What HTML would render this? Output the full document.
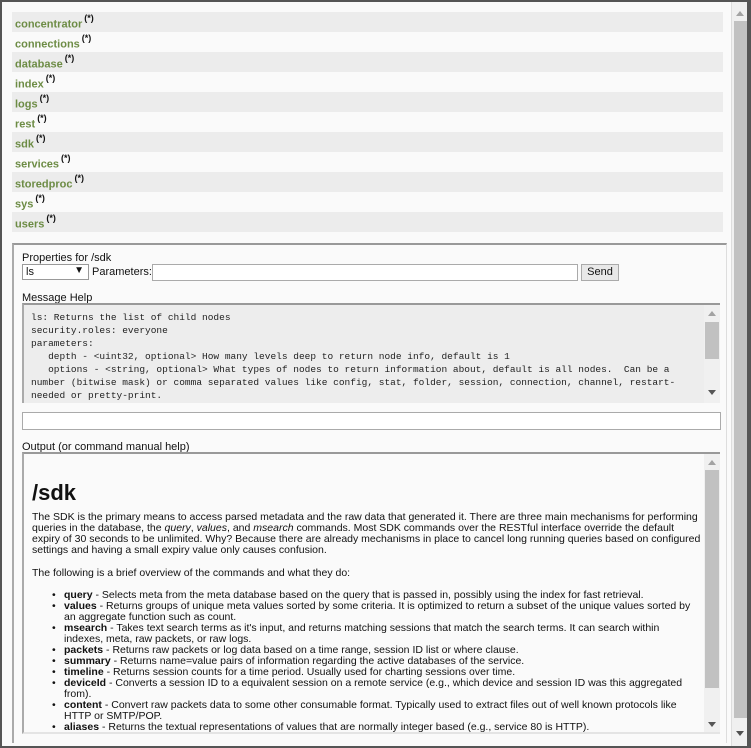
<!DOCTYPE html>
<html><head><meta charset="utf-8"><style>
*{margin:0;padding:0;box-sizing:border-box}
body{width:751px;height:748px;overflow:hidden;background:#fafafa;font-family:"Liberation Sans",Arial,sans-serif;font-size:11px;color:#111;position:relative}
.frame{position:absolute;left:0;top:0;width:751px;height:748px;border:2px solid #555;border-right:none;pointer-events:none}
.a{position:absolute}
.row{position:absolute;left:12px;width:711px;height:20px;padding:3px 0 0 3px}
.row.g{background:#ececec}
.row b{color:#6d8c45;font-size:11px}
.row sup{font-size:9px;font-weight:bold;color:#111;position:relative;top:-2px;margin-left:2px}
.sb{position:absolute;background:#f0f0f0}
.th{position:absolute;background:#c1c1c1}
.up,.dn{position:absolute;width:0;height:0;border-left:4px solid transparent;border-right:4px solid transparent}
.up{border-bottom:5px solid #a3a3a3}
.dn{border-top:5px solid #505050}
pre{font-family:"Liberation Mono",monospace;font-size:9.5px;line-height:13px;color:#222}
.out{font-size:10.5px;line-height:11px;color:#111}
ul{list-style:none}
li{position:relative;padding-left:0}
li:before{content:"•";position:absolute;left:-12px}
</style></head><body>
<div class="row g" style="top:12px"><b>concentrator</b><sup>(*)</sup></div>
<div class="row" style="top:32px"><b>connections</b><sup>(*)</sup></div>
<div class="row g" style="top:52px"><b>database</b><sup>(*)</sup></div>
<div class="row" style="top:72px"><b>index</b><sup>(*)</sup></div>
<div class="row g" style="top:92px"><b>logs</b><sup>(*)</sup></div>
<div class="row" style="top:112px"><b>rest</b><sup>(*)</sup></div>
<div class="row g" style="top:132px"><b>sdk</b><sup>(*)</sup></div>
<div class="row" style="top:152px"><b>services</b><sup>(*)</sup></div>
<div class="row g" style="top:172px"><b>storedproc</b><sup>(*)</sup></div>
<div class="row" style="top:192px"><b>sys</b><sup>(*)</sup></div>
<div class="row g" style="top:212px"><b>users</b><sup>(*)</sup></div>

<div class="a" style="left:12px;top:243px;width:715px;height:500px;border-top:2px solid #999;border-left:2px solid #aaa;border-right:1px solid #ddd"></div>
<div class="a" style="left:22px;top:252px">Properties for /sdk</div>
<div class="a" style="left:22px;top:264px;width:67px;height:16px;border:1px solid #999;background:#fff;padding:1px 3px">ls<span style="position:absolute;right:4px;top:0;font-size:10px">▼</span></div>
<div class="a" style="left:92px;top:266px">Parameters:</div>
<div class="a" style="left:152px;top:264px;width:426px;height:17px;border:1px solid #aaa;background:#fff"></div>
<div class="a" style="left:581px;top:264px;width:38px;height:17px;border:1px solid #aaa;background:#e8e8e8;text-align:center;line-height:15px;font-size:11px">Send</div>
<div class="a" style="left:22px;top:292px">Message Help</div>
<div class="a" style="left:22px;top:303px;width:698px;height:100px;background:#ededed;border-top:2px solid #999;border-left:2px solid #aaa;overflow:hidden">
<pre style="position:absolute;left:7px;top:6px">ls: Returns the list of child nodes
security.roles: everyone
parameters:
   depth - &lt;uint32, optional&gt; How many levels deep to return node info, default is 1
   options - &lt;string, optional&gt; What types of nodes to return information about, default is all nodes.  Can be a
number (bitwise mask) or comma separated values like config, stat, folder, session, connection, channel, restart-
needed or pretty-print.</pre>
<div class="sb" style="left:680px;top:0;width:16px;height:98px"></div>
<div class="th" style="left:681px;top:17px;width:14px;height:37px"></div>
<div class="up" style="left:684px;top:6px"></div>
<div class="dn" style="left:684px;top:85px;border-top-color:#555"></div>
</div>
<div class="a" style="left:22px;top:412px;width:699px;height:18px;border:1px solid #aaa;background:#fff"></div>
<div class="a" style="left:22px;top:441px">Output (or command manual help)</div>
<div class="a" style="left:22px;top:452px;width:698px;height:282px;background:#fafafa;border-top:2px solid #999;border-left:2px solid #aaa;border-bottom:2px solid #e4e4e4;overflow:hidden">
<div class="a" style="left:8px;top:26px;font-size:22px;font-weight:bold;line-height:26px">/sdk</div>
<div class="a out" style="left:8px;top:58px;width:672px">The SDK is the primary means to access parsed metadata and the raw data that generated it. There are three main mechanisms for performing queries in the database, the <i>query</i>, <i>values</i>, and <i>msearch</i> commands. Most SDK commands over the RESTful interface override the default expiry of 30 seconds to be unlimited. Why? Because there are already mechanisms in place to cancel long running queries based on configured settings and having a small expiry value only causes confusion.</div>
<div class="a out" style="left:8px;top:114px">The following is a brief overview of the commands and what they do:</div>
<ul class="a out" style="left:40px;top:136px;width:630px">
<li><b>query</b> - Selects meta from the meta database based on the query that is passed in, possibly using the index for fast retrieval.</li>
<li><b>values</b> - Returns groups of unique meta values sorted by some criteria. It is optimized to return a subset of the unique values sorted by an aggregate function such as count.</li>
<li><b>msearch</b> - Takes text search terms as it's input, and returns matching sessions that match the search terms. It can search within indexes, meta, raw packets, or raw logs.</li>
<li><b>packets</b> - Returns raw packets or log data based on a time range, session ID list or where clause.</li>
<li><b>summary</b> - Returns name=value pairs of information regarding the active databases of the service.</li>
<li><b>timeline</b> - Returns session counts for a time period. Usually used for charting sessions over time.</li>
<li><b>deviceId</b> - Converts a session ID to a equivalent session on a remote service (e.g., which device and session ID was this aggregated from).</li>
<li><b>content</b> - Convert raw packets data to some other consumable format. Typically used to extract files out of well known protocols like HTTP or SMTP/POP.</li>
<li><b>aliases</b> - Returns the textual representations of values that are normally integer based (e.g., service 80 is HTTP).</li>
</ul>
<div class="sb" style="left:680px;top:0;width:16px;height:280px"></div>
<div class="th" style="left:681px;top:16px;width:14px;height:218px"></div>
<div class="up" style="left:684px;top:6px"></div>
<div class="dn" style="left:684px;top:268px;border-top-color:#555"></div>
</div>

<div class="sb" style="left:731px;top:0;width:20px;height:748px;border-left:1px solid #ddd"></div>
<div class="th" style="left:734px;top:21px;width:13px;height:697px"></div>
<div class="up" style="left:736px;top:11px"></div>
<div class="dn" style="left:736px;top:731px"></div>
<div class="a" style="left:747px;top:0;width:4px;height:748px;background:#555"></div>
<div class="frame"></div>
</body></html>
